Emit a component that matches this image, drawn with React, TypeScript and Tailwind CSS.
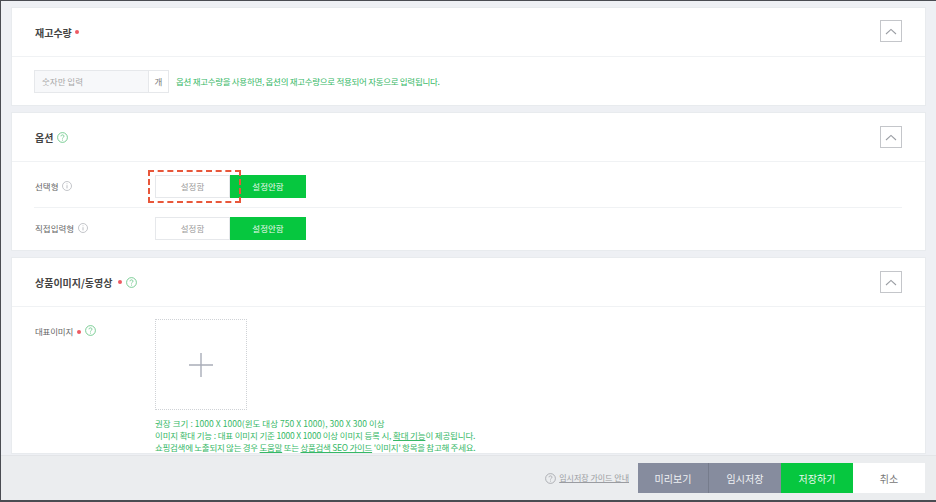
const font = "[font-family:'Noto_Sans_CJK_KR','Noto_Sans',sans-serif]";

function HelpIcon({ className = 'text-[#5cc27c]' }: { className?: string }) {
  return (
    <svg width="11" height="11" viewBox="0 0 11 11" fill="none" className={className}>
      <circle cx="5.5" cy="5.5" r="4.9" stroke="currentColor" strokeWidth="0.8" />
      <path d="M4 4.3c0-.9.7-1.4 1.5-1.4s1.5.5 1.5 1.3c0 1-1.5 1.2-1.5 2.3" stroke="currentColor" strokeWidth="0.8" />
      <circle cx="5.5" cy="8" r="0.5" fill="currentColor" />
    </svg>
  );
}

function InfoIcon() {
  return (
    <svg width="10" height="10" viewBox="0 0 10 10" fill="none" className="text-[#b5b8bd]">
      <circle cx="5" cy="5" r="4.5" stroke="currentColor" strokeWidth="0.8" />
      <path d="M5 4.2v3.2" stroke="currentColor" strokeWidth="0.9" />
      <circle cx="5" cy="2.8" r="0.5" fill="currentColor" />
    </svg>
  );
}

function Dot() {
  return <span className="h-[4px] w-[4px] rounded-full bg-[#ee5a62]" />;
}

function Card({ title, dot, help, titleClass = '', btnClass = '', children }: {
  title: string;
  dot?: boolean;
  help?: boolean;
  titleClass?: string;
  btnClass?: string;
  children: React.ReactNode;
}) {
  return (
    <section className="border border-[#e8ebee] bg-white">
      <div className="flex h-[49px] items-center justify-between border-b border-[#f0f2f4] pl-[23px] pr-[23px]">
        <div className="flex items-center gap-[3px]">
          <h3 className={`text-[10px] font-bold text-[#444] ${titleClass}`}>{title}</h3>
          {dot && <Dot />}
          {help && <span className="ml-[1px] flex"><HelpIcon /></span>}
        </div>
        <button className={`flex h-[22px] w-[22px] items-center justify-center border border-[#c4c6ca] bg-white ${btnClass}`}>
          <svg width="12" height="7" viewBox="0 0 12 7" fill="none">
            <path d="M1 6l5-4.6L11 6" stroke="#9a9da3" strokeWidth="1.1" />
          </svg>
        </button>
      </div>
      {children}
    </section>
  );
}

function Toggle() {
  return (
    <div className="flex h-[23px] text-[8.5px]">
      <div className="flex w-[75px] items-center justify-center border border-[#e6e8eb] bg-white text-[#9a9a9a]">설정함</div>
      <div className="flex w-[76px] items-center justify-center bg-[#06c73f] text-[#e8f8ec]">설정안함</div>
    </div>
  );
}

export default function App() {
  return (
    <div className={`${font} flex h-[502px] w-[936px] flex-col overflow-hidden border-b-2 border-l border-t border-[#4a4c52] bg-[#eef0f4]`}>
      <main className="relative h-[454px] overflow-hidden pl-[10px] pr-[10px] pt-[6px]">
        <div className="flex flex-col gap-[6px]">
          <Card title="재고수량" dot btnClass="mb-[2px]">
            <div className="flex h-[48px] items-center gap-[7px] pl-[22px]">
              <div className="flex h-[23px] w-[135px] border border-[#e6e8eb] text-[8.5px]">
                <div className="flex w-[113px] items-center bg-[#f7f8fa] pl-[7px] text-[#a8a8a8]">숫자만 입력</div>
                <div className="flex flex-1 items-center justify-center border-l border-[#e6e8eb] text-[#777]">개</div>
              </div>
              <p className="text-[8.5px] tracking-[-0.3px] text-[#36b866]">옵션 재고수량을 사용하면, 옵션의 재고수량으로 적용되어 자동으로 입력됩니다.</p>
            </div>
          </Card>

          <Card title="옵션" help>
            <div className="pl-[22px] pr-[23px] pt-[13px]">
              <div className="flex h-[33px] items-start border-b border-[#f0f2f4]">
                <div className="flex h-[22px] w-[121px] items-center gap-[4px] pl-[1px] text-[8.5px] text-[#666]">선택형 <InfoIcon /></div>
                <Toggle />
              </div>
              <div className="flex h-[42px] items-start pt-[9px]">
                <div className="flex h-[22px] w-[121px] items-center gap-[4px] pl-[1px] text-[8.5px] text-[#666]">직접입력형 <InfoIcon /></div>
                <Toggle />
              </div>
            </div>
          </Card>

          <Card title="상품이미지/동영상" dot help titleClass="pr-[3px]">
            <div className="flex px-[22px] pt-[12px]">
              <div className="flex h-[23px] w-[121px] items-start gap-[4px] pl-[1px] pt-[6px] text-[8.5px] tracking-[-0.2px] text-[#666]">
                <span>대표이미지</span>
                <span className="mt-[5px] flex"><Dot /></span>
                <HelpIcon />
              </div>
              <div>
                <div className="flex h-[91px] w-[92px] items-center justify-center border border-dotted border-[#cfd2d6]">
                  <svg width="24" height="24" viewBox="0 0 24 24">
                    <path d="M12 0v24M0 12h24" stroke="#a9adb8" strokeWidth="1.4" />
                  </svg>
                </div>
                <div className="mt-[7px] text-[8.5px] leading-[12px] text-[#36b866]">
                  <p className="tracking-[0.05px]">권장 크기 : 1000 X 1000(윈도 대상 750 X 1000), 300 X 300 이상</p>
                  <p className="tracking-[-0.17px]">이미지 확대 기능 : 대표 이미지 기준 1000 X 1000 이상 이미지 등록 시, <u>확대 기능</u>이 제공됩니다.</p>
                  <p className="tracking-[-0.28px]">쇼핑검색에 노출되지 않는 경우 <u>도움말</u> 또는 <u>상품검색 SEO 가이드</u> '이미지' 항목을 참고해 주세요.</p>
                </div>
              </div>
            </div>
          </Card>
        </div>
        {/* 빨간 점선 강조 */}
        <div className="absolute left-[147px] top-[169px] h-[33px] w-[93px] border-2 border-dashed border-[#e8573a]" />
      </main>
      <footer className="flex h-[45px] items-center justify-end border-t border-[#e3e5e8] bg-[#ebedef] pr-[11px]">
        <a className="mr-[9px] flex items-center gap-[3px] text-[8px] text-[#9a9ca1] underline">
          <HelpIcon className="text-[#a0a2a7]" />
          임시저장 가이드 안내
        </a>
        <div className="flex h-[30px] text-[10px]">
          <button className="w-[71px] border-r border-[#767c8c] bg-[#868c9e] text-[#eef0f3]">미리보기</button>
          <button className="w-[72px] bg-[#868c9e] text-[#eef0f3]">임시저장</button>
          <button className="w-[72px] bg-[#06c73f] text-[#e8f8ec]">저장하기</button>
          <button className="w-[72px] bg-white text-[#777]">취소</button>
        </div>
      </footer>
    </div>
  );
}
